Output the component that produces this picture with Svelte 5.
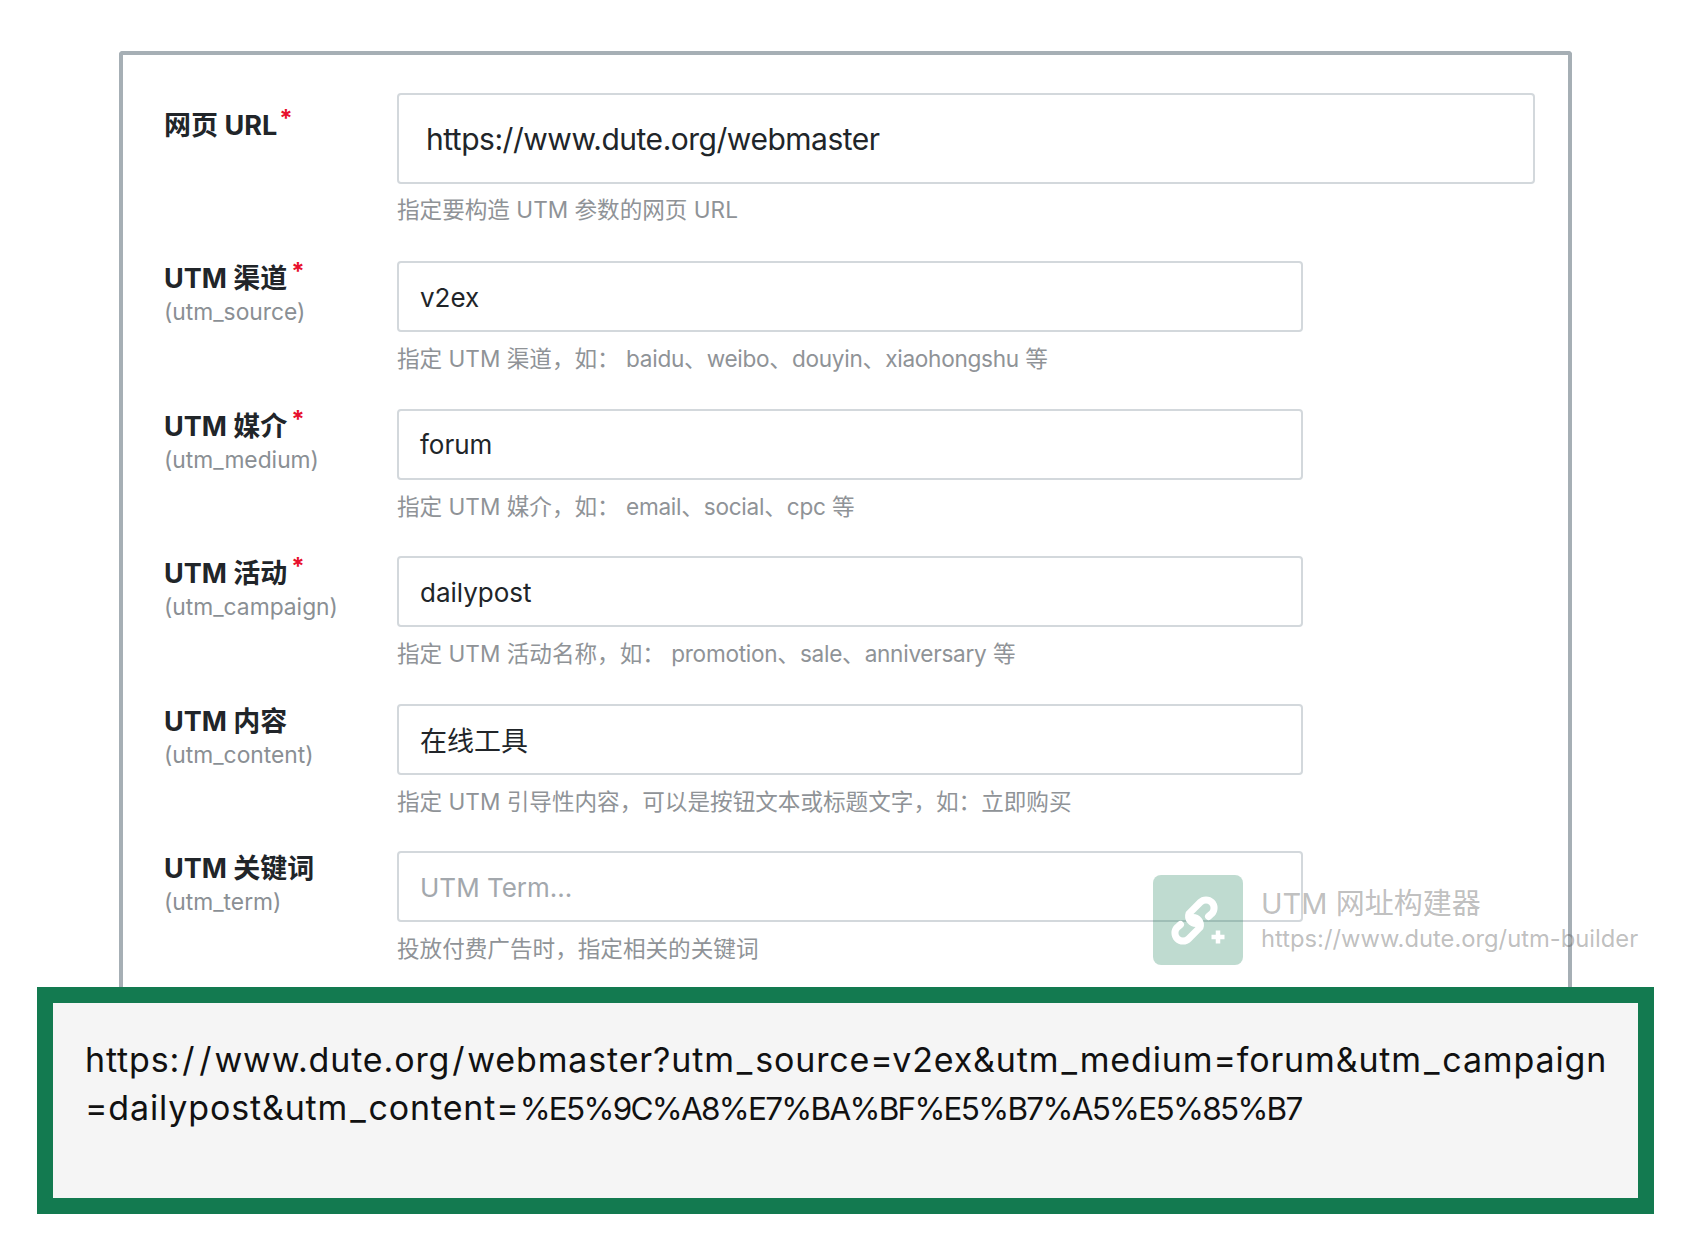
<script lang="ts">
  const fields = [
    { label: '网页 URL', key: '', value: 'https://www.dute.org/webmaster', hint: '指定要构造 UTM 参数的网页 URL', required: true, wide: true },
    { label: 'UTM 渠道', key: '(utm_source)', value: 'v2ex', hint: '指定 UTM 渠道，如： baidu、weibo、douyin、xiaohongshu 等', required: true },
    { label: 'UTM 媒介', key: '(utm_medium)', value: 'forum', hint: '指定 UTM 媒介，如： email、social、cpc 等', required: true },
    { label: 'UTM 活动', key: '(utm_campaign)', value: 'dailypost', hint: '指定 UTM 活动名称，如： promotion、sale、anniversary 等', required: true },
    { label: 'UTM 内容', key: '(utm_content)', value: '在线工具', cjk: true, hint: '指定 UTM 引导性内容，可以是按钮文本或标题文字，如：立即购买' },
    { label: 'UTM 关键词', key: '(utm_term)', value: '', placeholder: 'UTM Term...', hint: '投放付费广告时，指定相关的关键词' },
  ];

  // lower-case words in the hints run a little tighter than the CJK around them
  const words = (s: string) => s.split(/([a-z]+)/);

  const pieces = (s: string) => s.split(/([\/_]|%[0-9A-F]{2}.*$)/).filter(Boolean);

  const lines = [
    'https://www.dute.org/webmaster?utm_source=v2ex&utm_medium=forum&utm_campaign',
    '=dailypost&utm_content=%E5%9C%A8%E7%BA%BF%E5%B7%A5%E5%85%B7',
  ];
</script>

<main class="page">
  <section class="card">
    {#each fields as f}
      <div class="row" class:wide={f.wide}>
        <div class="label">
          <div class="name">{f.label}{#if f.required}<span class="req" class:tight={f.wide}>*</span>{/if}</div>
          {#if f.key}<div class="key">{f.key}</div>{/if}
        </div>
        <div class="control">
          <div class="input" class:placeholder={!f.value} class:cjk={f.cjk}>{f.value || f.placeholder}</div>
          <div class="hint">{#each words(f.hint) as w, i}{#if i % 2}<span class="word">{w}</span>{:else}{w}{/if}{/each}</div>
        </div>
      </div>
    {/each}
  </section>

  <section class="result">
    {#each lines as line}
      <div class="line">
        {#each pieces(line) as part}{#if part === '/' || part === '_'}<span class="sep">{part}</span>{:else if part[0] === '%'}<span class="enc">{part}</span>{:else}{part}{/if}{/each}
      </div>
    {/each}
  </section>

  <div class="watermark">
    <div class="logo">
      <svg viewBox="0 0 90 90" width="90" height="90" fill="none" stroke="#fff" stroke-linecap="round" stroke-linejoin="round">
        <g stroke-width="7">
          <path d="M55.5 41.5 L58.7 38.7 A8 8 0 0 0 47.3 27.3 L36 38.6 A7.5 7.5 0 0 0 44 48.5"/>
          <path d="M27.5 49.5 L24.3 52.3 A8 8 0 0 0 35.7 63.7 L47 52.4 A7.5 7.5 0 0 0 39 42.5"/>
        </g>
        <path d="M65 55.5v13M58.5 62h13" stroke-width="4.5" stroke-linecap="butt"/>
      </svg>
    </div>
    <div class="mark-text">
      <div class="mark-title">UTM 网址构建器</div>
      <div class="mark-url">https://www.dute.org/utm-builder</div>
    </div>
  </div>
</main>

<style>
  :global(body) { background: #fff; }

  .page {
    position: relative;
    width: 1690px;
    height: 1252px;
    padding-top: 51px;
    box-sizing: border-box;
    font-family: Inter, "Noto Sans CJK SC", sans-serif;
  }

  .card {
    margin-left: 119px;
    width: 1453px;
    height: 936px;
    box-sizing: border-box;
    border: 4px solid #a6afb5;
    border-bottom: 0;
    border-radius: 4px 4px 0 0;
    padding: 38px 0 0 41px;
  }

  .row { display: flex; height: 147.6px; }
  .row.wide { height: 168px; }

  .label { width: 233px; flex: none; }
  .wide .label { padding-top: 15px; }

  .name { font-size: 27px; line-height: 36px; font-weight: 700; color: #212529; white-space: nowrap; }
  .req { color: #e8112d; font-size: 24px; vertical-align: 8px; line-height: 0; margin-left: 4px; }
  .req.tight { margin-left: 2px; }
  .key { font-size: 22.8px; line-height: 30px; color: #8a8f94; }

  .control { flex: none; width: 906px; }
  .wide .control { width: 1138px; }

  .input {
    height: 71px;
    box-sizing: border-box;
    border: 2px solid #d3d8dc;
    border-radius: 4px;
    padding: 1px 21px 0;
    display: flex;
    align-items: center;
    font-size: 26px;
    color: #212529;
    background: #fff;
  }
  .wide .input { height: 91px; padding: 0 27px; font-size: 30px; letter-spacing: -0.48px; }
  .input.cjk { font-size: 27px; padding-top: 0; }
  .input.placeholder { color: #a3a8ad; }

  .hint { margin-top: 11px; font-size: 22.6px; line-height: 32px; color: #8f9397; white-space: nowrap; }
  .wide .hint { margin-top: 10px; }
  .word { letter-spacing: -0.28px; }

  .result {
    margin: 0 36px 0 37px;
    height: 227px;
    box-sizing: border-box;
    border: 16px solid #137a50;
    background: #f5f5f5;
    padding: 33px 0 0 32px;
    font-size: 34px;
    line-height: 48px;
    letter-spacing: 0.85px;
    color: #111;
    white-space: nowrap;
  }
  .sep { margin: 0 2px; }
  .enc { font-size: 31.5px; letter-spacing: -1.72px; }

  .watermark {
    position: absolute;
    left: 1153px;
    top: 875px;
    display: flex;
    gap: 18px;
    align-items: center;
  }
  .logo {
    width: 90px;
    height: 90px;
    border-radius: 8px;
    background: rgba(19, 122, 80, 0.27);
  }
  .logo svg { display: block; }
  .mark-title { font-size: 29px; line-height: 38px; color: rgba(90, 90, 90, 0.4); }
  .mark-url { font-size: 23.75px; line-height: 32px; color: rgba(90, 90, 90, 0.4); white-space: nowrap; }
</style>
